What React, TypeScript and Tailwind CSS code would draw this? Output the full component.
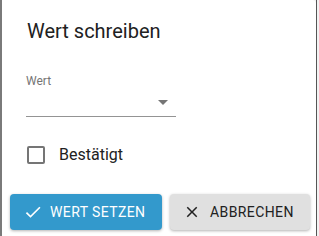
import React from 'react';

const CheckIcon = () => (
  <svg width="20" height="20" viewBox="0 0 24 24" fill="white">
    <path d="M9 16.17L4.83 12l-1.42 1.41L9 19 21 7l-1.41-1.41z" />
  </svg>
);

const CloseIcon = () => (
  <svg width="18" height="18" viewBox="0 0 24 24" fill="#212121">
    <path d="M19 6.41L17.59 5 12 10.59 6.41 5 5 6.41 10.59 12 5 17.59 6.41 19 12 13.41 17.59 19 19 17.59 13.41 12z" />
  </svg>
);

export default function App() {
  return (
    <div
      className="flex h-[236px] w-[319px] overflow-hidden bg-[#f2f2f2]"
      style={{ fontFamily: 'Roboto, "Liberation Sans", sans-serif' }}
    >
      <div className="w-[2px] shrink-0 bg-[#7a7a7a]" />
      <div className="flex w-[314px] shrink-0 flex-col rounded-tr-[4px] bg-white">
        <h2 className="mt-[19px] pl-[25px] text-[20px] leading-[24px] text-[#212121]">Wert schreiben</h2>

        <div className="ml-[24px] mt-[31px] w-[150px]">
          <div className="text-[12px] leading-[14px] text-[#757575]">Wert</div>
          <div className="flex h-[29px] items-center justify-end border-b border-[#949494] pr-[8px]">
            <div className="h-0 w-0 border-x-[5px] border-t-[5px] border-x-transparent border-t-[#757575]" />
          </div>
        </div>

        <label className="ml-[25px] mt-[28px] flex items-center gap-[14px]">
          <span className="h-[18px] w-[18px] rounded-[2px] border-2 border-[#757575]" />
          <span className="text-[16px] leading-[20px] text-[#212121]">Bestätigt</span>
        </label>

        <div className="mt-[29px] flex gap-[8px] pl-[8px]">
          <button className="flex h-[36px] w-[152px] items-center gap-[7px] rounded-[4px] bg-[#3399cc] pl-[13px] text-[14px] font-normal tracking-[0.4px] text-white shadow-[0_1px_3px_rgba(0,0,0,0.3)]">
            <CheckIcon />
            WERT SETZEN
          </button>
          <button className="flex h-[36px] w-[140px] items-center gap-[9px] rounded-[4px] bg-[#e0e0e0] pl-[13px] text-[14px] font-normal tracking-[0.4px] text-[#212121] shadow-[0_1px_3px_rgba(0,0,0,0.3)]">
            <CloseIcon />
            ABBRECHEN
          </button>
        </div>
      </div>
      <div className="w-[1px] shrink-0 bg-[#555555]" />
    </div>
  );
}
